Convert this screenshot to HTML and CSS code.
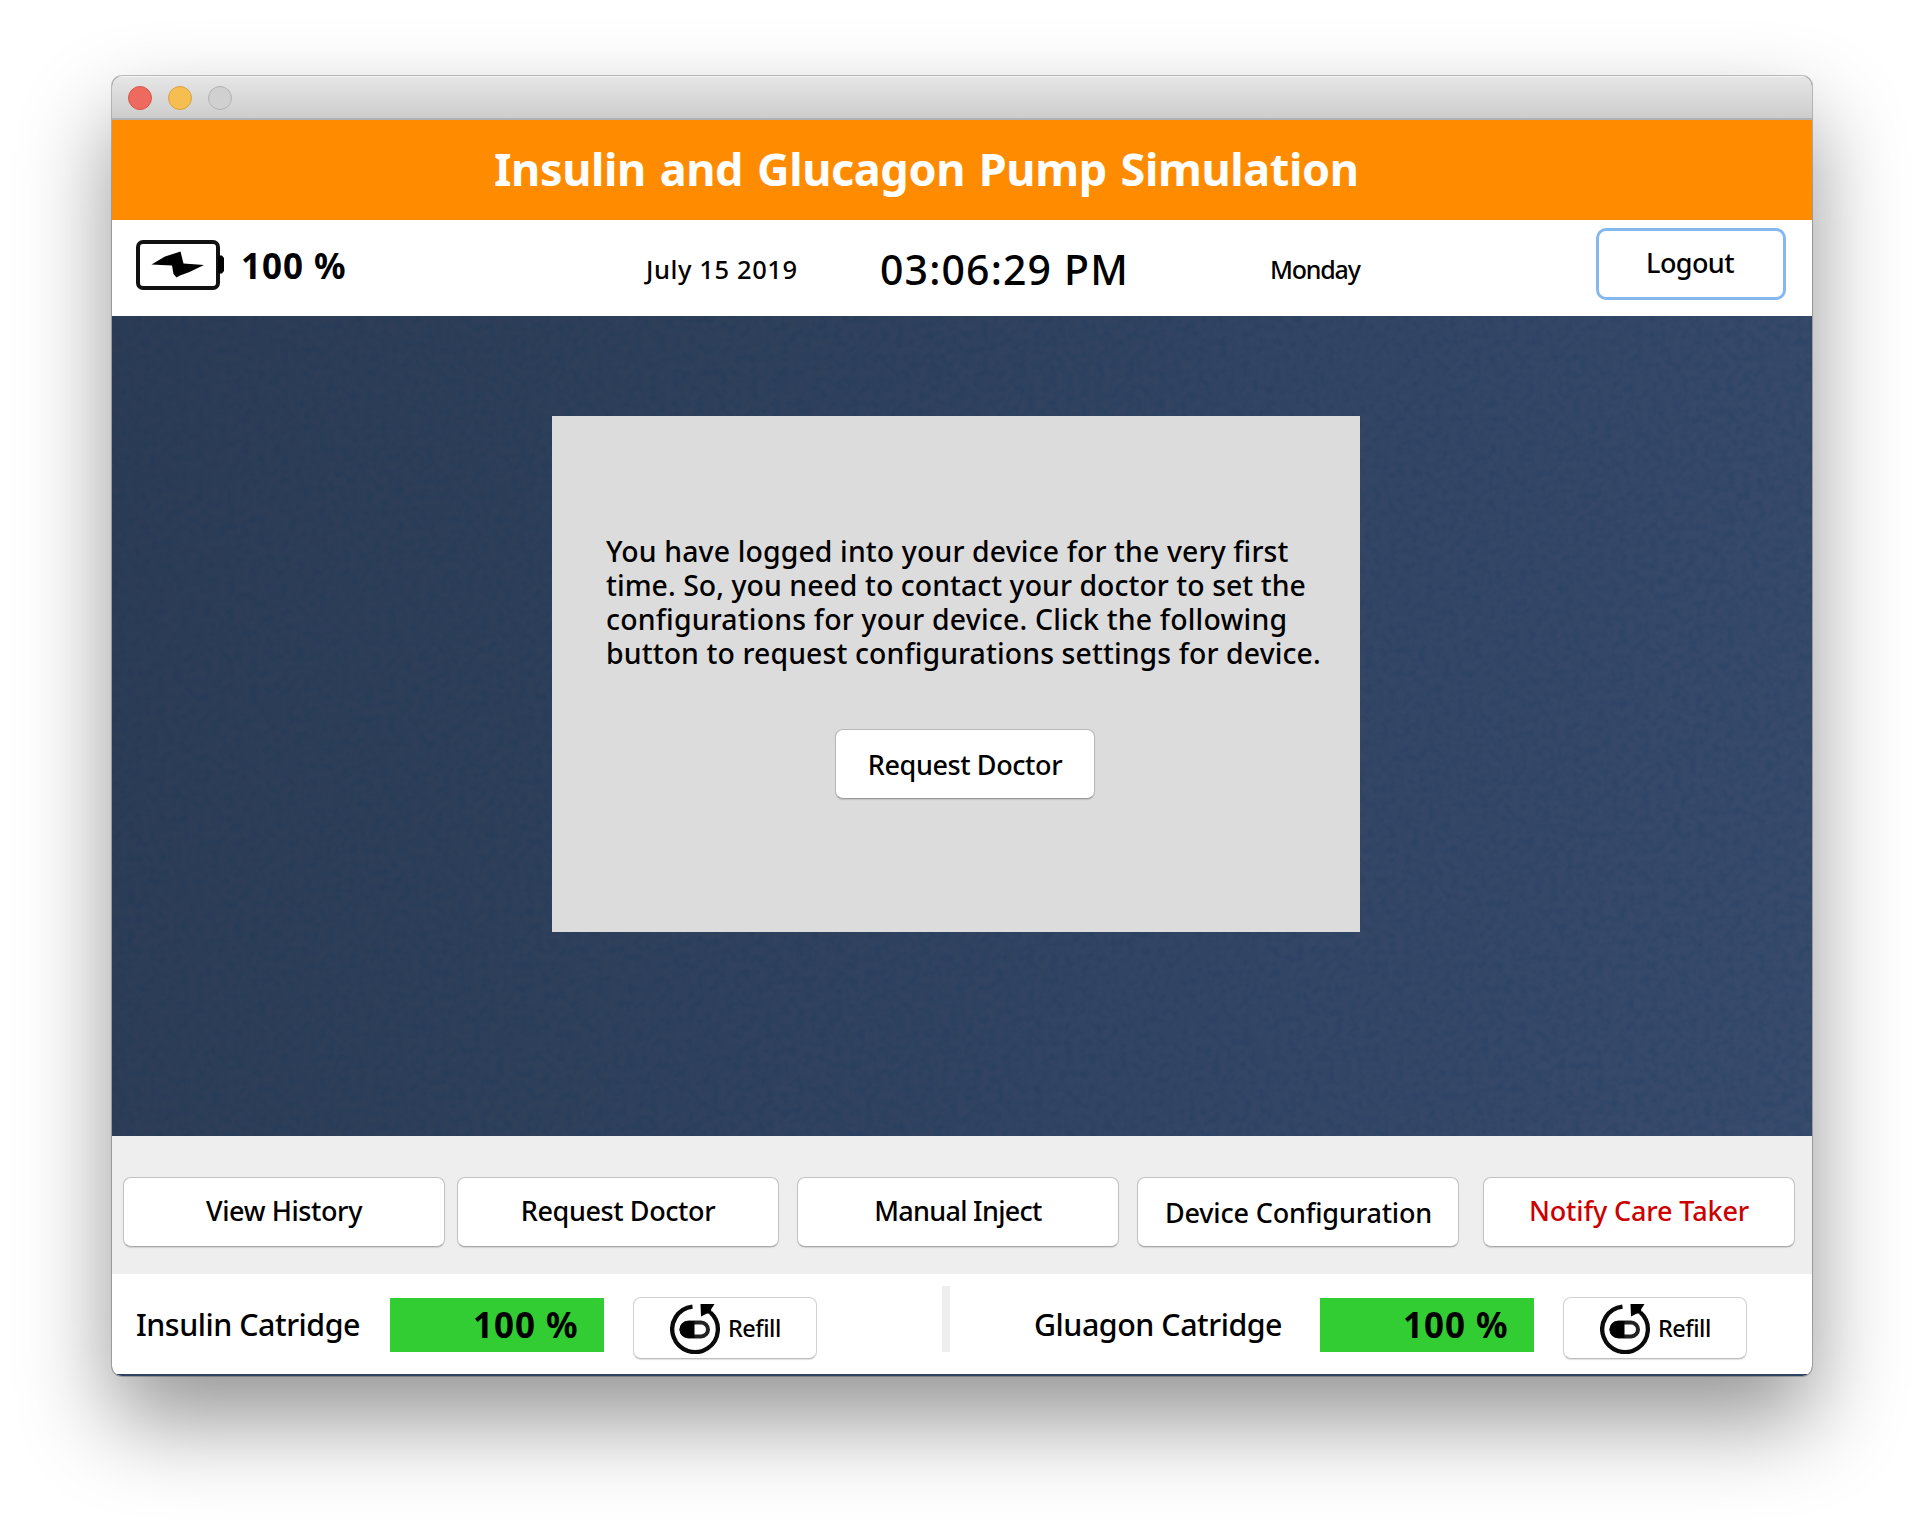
FILE: index.html
```
<!DOCTYPE html>
<html lang="en">
<head>
<meta charset="utf-8">
<title>Insulin and Glucagon Pump Simulation</title>
<link rel="stylesheet" href="styles.css">
</head>
<body>
<svg class="defs" width="0" height="0" aria-hidden="true">
  <symbol id="refill" viewBox="0 0 50 50">
    <path d="M22.500 2.600A22.800 22.800 0 1 0 40.500 8.500" fill="none" stroke="#0a0a0a" stroke-width="4.300"/>
    <path d="M30.500 0H44.500L41 5.500L42 10L37 9.500L31 12.500Z" fill="#000"/>
    <rect x="11.500" y="18.500" width="26.500" height="14" rx="7" fill="#fff" stroke="#222" stroke-width="4"/>
    <path d="M24.500 17H18a8.300 8.300 0 0 0 0 17h6.500Z" fill="#000"/>
  </symbol>
</svg>
<main class="window">
  <header class="titlebar">
    <span class="light close"></span><span class="light minimize"></span><span class="light zoom"></span>
  </header>
  <h1 class="banner">Insulin and Glucagon Pump Simulation</h1>
  <section class="status">
    <svg class="battery" width="89" height="50" viewBox="0 0 89 50">
      <rect x="2" y="2" width="80" height="46" rx="5" fill="#fff" stroke="#111" stroke-width="4"/>
      <path d="M82 17l1.500-1.500H86L88 18v13l-2 2.500h-2.500L82 32z" fill="#000"/>
      <path d="M15.500 24.500L29 16.500L41.500 12.500L44.500 11.500L47.500 23.500L68 25L53.500 32L44 35.500L40.500 37.500L37.500 34L36 25.500Z" fill="#000"/>
    </svg>
    <span class="percent">100 %</span>
    <span class="date">July 15 2019</span>
    <span class="time">03:06:29 PM</span>
    <span class="day">Monday</span>
    <button class="btn logout">Logout</button>
  </section>
  <section class="stage">
    <svg class="texture" width="1700" height="820" aria-hidden="true">
      <filter id="grain" x="0" y="0" width="100%" height="100%">
        <feTurbulence type="fractalNoise" baseFrequency="0.13" numOctaves="2" seed="4"/>
        <feColorMatrix values="0 0 0 0 0  0 0 0 0 0.03  0 0 0 0 0.1  0.9 0 0 0 -0.34"/>
      </filter>
      <rect width="1700" height="820" filter="url(#grain)"/>
    </svg>
    <div class="card">
      <p class="message">
        <span class="l1">You have logged into your device for the very first</span>
        <span class="l2">time. So, you need to contact your doctor to set the</span>
        <span class="l3">configurations for your device. Click the following</span>
        <span class="l4">button to request configurations settings for device.</span>
      </p>
      <button class="btn request">Request Doctor</button>
    </div>
  </section>
  <nav class="toolbar">
    <button class="btn">View History</button>
    <button class="btn">Request Doctor</button>
    <button class="btn inject">Manual Inject</button>
    <button class="btn device">Device Configuration</button>
    <button class="btn notify">Notify Care Taker</button>
  </nav>
  <footer class="cartridges">
    <span class="label">Insulin Catridge</span>
    <span class="level">100 %</span>
    <button class="btn refill"><svg width="50" height="50"><use href="#refill"/></svg>Refill</button>
    <i class="divider"></i>
    <span class="label">Gluagon Catridge</span>
    <span class="level">100 %</span>
    <button class="btn refill"><svg width="50" height="50"><use href="#refill"/></svg>Refill</button>
  </footer>
</main>
</body>
</html>
```
FILE: styles.css
```
* { box-sizing: border-box; }
body {
  margin: 0;
  height: 1524px;
  padding: 76px 112px 0;
  background: #fff;
  color: #000;
  font-family: "Noto Sans", "Open Sans", sans-serif;
  font-weight: 500;
  overflow: hidden;
}
.defs { position: absolute; }
.window {
  width: 1700px;
  height: 1300px;
  display: flex;
  flex-direction: column;
  overflow: hidden;
  border-radius: 10px;
  background: #2f4363;
  box-shadow: 0 0 0 1px rgba(0,0,0,.24), 0 44px 90px rgba(0,0,0,.42);
}
.titlebar {
  height: 44px;
  flex: none;
  display: flex;
  align-items: center;
  gap: 16px;
  padding: 2px 0 0 16px;
  background: linear-gradient(#e6e6e6, #cdcdcd);
  border-bottom: 2px solid #b0b1b2;
  box-shadow: inset 0 1px #f4f4f4;
}
.light { width: 24px; height: 24px; border-radius: 50%; border: 1px solid; }
.close { background: #ee6a5f; border-color: #d5564c; }
.minimize { background: #f6be50; border-color: #d9a140; }
.zoom { background: #d0d0d0; border-color: #b2b2b2; }
.banner {
  flex: none;
  height: 100px;
  margin: 0;
  padding-left: 382px;
  background: #ff8c00;
  color: #fff;
  font-size: 45px;
  line-height: 98px;
  font-weight: 700;
  letter-spacing: -.4px;
  word-spacing: 2.5px;
  white-space: nowrap;
}
.status {
  flex: none;
  height: 96px;
  display: grid;
  grid-template-columns: 105px 404px 235px 390px 326px 190px;
  align-items: center;
  padding-left: 24px;
  background: #fff;
  white-space: nowrap;
}
.battery { display: block; margin-bottom: 6px; }
.percent { font-size: 35px; font-weight: 700; letter-spacing: .95px; padding-bottom: 6px; }
.date { font-size: 25.5px; letter-spacing: .6px; padding: 1px 0 0 1px; }
.time { font-size: 41px; letter-spacing: 1.15px; padding-top: 1px; }
.day { font-size: 25px; letter-spacing: -1.2px; padding-top: 1px; }
.btn {
  height: 70px;
  padding: 0 0 3px;
  display: flex;
  align-items: center;
  justify-content: center;
  border: 1px solid #c3c3c3;
  border-bottom-color: #a9a9a9;
  border-radius: 8px;
  background: #fff;
  box-shadow: 0 1px 1px rgba(0,0,0,.12);
  color: #000;
  font: inherit;
  font-size: 27px;
  letter-spacing: -.4px;
  white-space: nowrap;
}
.logout {
  height: 72px;
  margin-bottom: 8px;
  padding-right: 2px;
  border: 3px solid #86b8f0;
  border-radius: 10px;
  box-shadow: none;
  letter-spacing: -.6px;
}
.stage {
  flex: none;
  height: 820px;
  display: grid;
  padding: 100px 0 0 440px;
  position: relative;
  background: linear-gradient(105deg, #2d3c55 0%, #2f405b 35%, #334565 65%, #384b6c 100%);
}
.texture { position: absolute; inset: 0; opacity: .36; }
.card {
  position: relative;
  width: 808px;
  height: 516px;
  padding: 118px 0 0 54px;
  background: #dcdcdc;
}
.message {
  margin: 0;
  display: grid;
  font-size: 28.4px;
  line-height: 34px;
  white-space: nowrap;
}
.l1 { letter-spacing: .14px; }
.l2 { letter-spacing: .06px; }
.l3 { letter-spacing: .2px; }
.l4 { letter-spacing: .12px; }
.request { width: 260px; margin: 59px 0 0 229px; padding-bottom: 0; border-color: #b9b9b9; border-bottom-color: #999; }
.toolbar {
  flex: none;
  height: 138px;
  display: grid;
  grid-template-columns: 322px 322px 322px 322px 312px;
  column-gap: 18px;
  padding: 41px 0 0 11px;
  background: #eee;
}
.toolbar .btn:nth-child(n+2) { margin-left: -6px; margin-right: 6px; }
.toolbar .inject { letter-spacing: -.71px; }
.toolbar .device { letter-spacing: -.17px; padding: 0 0 0 1px; }
.toolbar .notify:nth-child(5) { margin: 0; color: #c00; letter-spacing: -.14px; }
.cartridges {
  flex: none;
  height: 100px;
  display: grid;
  grid-template-columns: 254px 243px 309px 92px 286px 243px 184px;
  align-items: center;
  padding-left: 24px;
  background: #fff;
  white-space: nowrap;
}
.label { font-size: 30.4px; letter-spacing: -.47px; padding-top: 1px; }
.level {
  width: 214px;
  height: 54px;
  padding-left: 83px;
  margin-top: 2px;
  background: #32cd32;
  font-size: 35px;
  font-weight: 700;
  line-height: 54px;
  letter-spacing: .95px;
}
.refill {
  width: 184px;
  height: 62px;
  margin-top: 8px;
  padding: 0 0 0 36px;
  gap: 8px;
  justify-content: flex-start;
  border-color: #d2d2d2;
  border-bottom-color: #bcbcbc;
  font-size: 23.5px;
  letter-spacing: -.49px;
}
.refill svg { margin-top: 1px; }
.divider { width: 8px; height: 66px; margin-bottom: 10px; background: #eee; }
```
